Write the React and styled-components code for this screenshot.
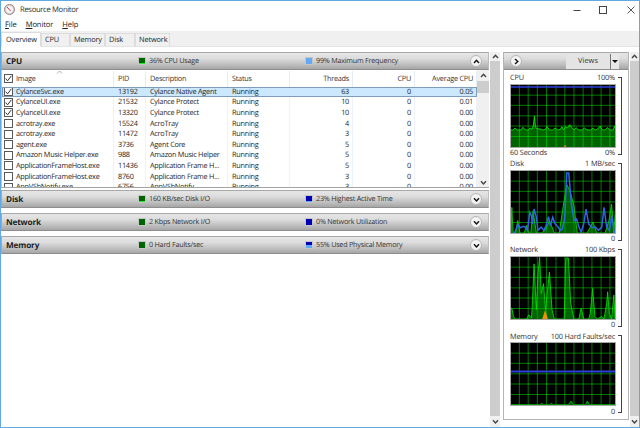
import React from 'react';
import styled, { createGlobalStyle } from 'styled-components';

const Global = createGlobalStyle`
  html, body { margin: 0; padding: 0; background: #fff; }
  body { font-family: "Open Sans", "Liberation Sans", sans-serif; font-size: 7.3px; color: #262626; text-rendering: geometricPrecision; }
  * { box-sizing: border-box; }
`;

const Window = styled.div`
  width: 640px; height: 428px; border: 1px solid #62a9e4; display: flex; flex-direction: column;
  overflow: hidden; background: #fff;
`;
const TitleBar = styled.div`
  height: 17px; display: flex; align-items: center; padding-left: 3px; gap: 5px; font-size: 7.7px; letter-spacing: -0.35px; color: #333;
`;
const Controls = styled.div`
  margin-left: auto; display: flex; align-items: center; gap: 18px; padding-right: 4px;
  color: #333;
`;
const MenuBar = styled.div`
  height: 13px; display: flex; align-items: center; padding-left: 4px; font-size: 7.6px; letter-spacing: -0.1px; color: #222;
  span { margin-right: 9px; }
  u { text-decoration-thickness: 0.5px; text-underline-offset: 1px; }
`;
const TabStrip = styled.div`
  height: 16px; background: #f0f0f0; display: flex; align-items: flex-end; padding-left: 0; border-bottom: 1px solid #e4e4e4;
`;
const Tab = styled.div`
  height: ${p => (p.$active ? 15 : 13)}px; width: ${p => p.$w}px; display: flex; align-items: center;
  padding-left: ${p => (p.$active ? 4 : 3)}px; font-size: 7.4px; letter-spacing: -0.15px;
  background: ${p => (p.$active ? '#fff' : '#f0f0f0')};
  border: 1px solid #dcdcdc; border-bottom: ${p => (p.$active ? '1px solid #fff' : 'none')};
  margin-bottom: ${p => (p.$active ? -1 : 0)}px; z-index: ${p => (p.$active ? 1 : 0)};
`;
const Body = styled.div`
  flex: 1; min-height: 0; display: flex; padding-top: 5px;
`;
const LeftCol = styled.div`
  width: 488px; display: flex; flex-direction: column;
`;
const Header = styled.div`
  height: 18px; flex: none; display: grid; grid-template-columns: 136px 167px 1fr 18px; align-items: center;
  background: linear-gradient(#e6e6e6 0%, #dcdcdc 35%, #c4c4c4 65%, #a6a6a6 100%);
  border: 1px solid #a8a8a8; border-bottom-color: #8e8e8e; border-right-color: #bdbdbd;
  margin-top: ${p => p.$mt || 0}px;
`;
const HName = styled.div`
  font-weight: 700; font-size: 8.2px; letter-spacing: -0.15px; padding-left: 4px; color: #1c1c1c;
`;
const Stat = styled.div`
  display: flex; align-items: center; gap: 3px; font-size: 7.2px; letter-spacing: -0.22px; color: #333;
`;
const Led = styled.i`
  display: block; width: 8px; height: 8px; border: 1px solid #c6c6c6; flex: none;
  background: linear-gradient(to top, ${p => p.$lit} ${p => p.$level}%, ${p => p.$dark} ${p => p.$level}%);
`;
const Round = styled.div`
  width: 12px; height: 12px; border-radius: 50%; background: #f4f4f4; border: 1px solid #b6b6b6;
  display: flex; align-items: center; justify-content: center; color: #111;
`;
const TableWrap = styled.div`
  height: 118px; flex: none; display: flex; border-bottom: 1px solid #a4a4a4; border-left: 1px solid #c4c4c4; overflow: hidden;
`;
const Table = styled.div`
  width: 475px; flex: none; position: relative; padding-top: 1px; letter-spacing: -0.25px;
`;
const Cols = `display: grid; grid-template-columns: 112px 32px 82px 62px 63px 62px 62px;`;
const HeadRow = styled.div`
  ${Cols} height: 15.5px; align-items: center;
`;
const HeadCell = styled.div`
  padding: 0 ${p => (p.$right ? 3 : 4)}px; height: 100%; display: flex; align-items: center; gap: 3px;
  justify-content: ${p => (p.$right ? 'flex-end' : 'flex-start')}; border-right: 1px solid #e4ecf6; color: #333;
`;
const Caret = styled.svg`
  position: absolute; left: 54px; top: 0;
`;
const Row = styled.div`
  ${Cols} height: 10.6px; align-items: center; white-space: nowrap; line-height: 10px;
  outline: ${p => (p.$sel ? '1px solid #7f9db9' : 'none')}; outline-offset: -1px;
  background: ${p => (p.$sel ? '#cce8ff' : 'transparent')};
`;
const Cell = styled.div`
  padding: 0 ${p => (p.$right ? 3 : 4)}px; text-align: ${p => (p.$right ? 'right' : 'left')};
  overflow: hidden; height: 100%; display: flex; align-items: center; gap: 3px;
  justify-content: ${p => (p.$right ? 'flex-end' : 'flex-start')};
  border-right: 1px solid ${p => (p.$sel ? 'transparent' : '#eef3fa')};
`;
const CheckBox = styled.span`
  width: 9px; height: 9px; border: 1px solid #5a5a5a; background: #fff; flex: none; display: flex;
  margin-left: -2px; margin-right: 0;
`;
const VScroll = styled.div`
  width: ${p => p.$w}px; flex: none; display: flex; flex-direction: column; align-items: center;
  background: #f0f0f0; height: 100%; margin-left: ${p => p.$ml || 0}px;
`;
const Arrow = styled.div`
  height: ${p => p.$h}px; flex: none; display: flex; align-items: center; justify-content: center; color: #444; width: 100%;
`;
const Thumb = styled.div`
  width: 100%; background: #cdcdcd; flex: ${p => (p.$small ? 'none' : 1)}; height: ${p => (p.$small ? '12px' : 'auto')};
`;
const Spacer = styled.div`flex: 1;`;
const RightBox = styled.div`
  width: 126px; margin-left: 3px; margin-right: 1px; height: 368px; border: 1px solid #b4b4b4; border-top: none; flex: none;
`;
const RightHeader = styled.div`
  height: 18px; display: flex; align-items: center; padding-left: 6px;
  background: linear-gradient(#e6e6e6 0%, #dcdcdc 35%, #c4c4c4 65%, #a6a6a6 100%);
  border-top: 1px solid #a8a8a8; border-bottom: 1px solid #8e8e8e;
`;
const Views = styled.div`
  margin-left: 44px; width: 45px; height: 15px; background: #e4e4e4; border-right: 1px solid #777;
  display: flex; align-items: center; justify-content: center; font-size: 7.5px; color: #333;
`;
const ViewsDrop = styled.div`
  width: 8px; height: 15px; background: #e8e8e8; display: flex; align-items: center; justify-content: center;
`;
const Graphs = styled.div`
  padding: 2.5px 0 0 6px; display: flex; flex-direction: column; gap: 0.2px;
`;
const Block = styled.div`
  display: grid; grid-template-columns: 106px 6px; grid-template-rows: 11px 64px 11px; column-gap: 1px;
`;
const Label = styled.div`
  display: flex; justify-content: space-between; align-items: center; font-size: 7.3px; letter-spacing: -0.15px; color: #333; white-space: nowrap; padding-right: 1px;
`;
const Bracket = styled.div`
  grid-column: 2; grid-row: 1 / 4; margin: 4px 1px 4px 1px; border: 1px solid #444; border-left: none; width: 4px;
`;
const GraphSvg = styled.svg`
  display: block; width: 106px; height: 64px; border: 1px solid #a8a8a8; background: #000;
`;

const toPts = a => a.map(p => p.join(',')).join(' ');
const Grid = () => (
  <g stroke="#00ff00" strokeOpacity="0.48" strokeWidth="3">
    {[33, 60, 88, 116, 145, 172, 200, 228, 255, 283, 310].map(x => <line key={x} x1={x} x2={x} y1="9" y2="198" />)}
    {[40, 71, 103, 134, 166].map(y => <line key={y} x1="7" x2="326" y1={y} y2={y} />)}
  </g>
);
const Area = ({ pts, fill = '#00a000', op = 0.55, line = '#00e000', w = 2.6 }) => (
  <g>
    <polygon points={toPts([[7, 198], ...pts, [326, 198]])} fill={fill} fillOpacity={op} />
    <polyline points={toPts(pts)} fill="none" stroke={line} strokeWidth={w} />
  </g>
);

const cpuPts = [[7,146],[14,146],[20,140],[26,146],[38,146],[44,138],[52,146],[60,146],[66,140],[72,144],[76,132],[79,104],[82,132],[85,142],[95,143],[105,146],[112,144],[118,136],[125,146],[135,146],[142,140],[150,146],[158,145],[163,136],[168,146],[174,136],[180,140],[187,130],[193,138],[200,146],[207,139],[214,146],[225,146],[232,140],[240,146],[250,146],[258,141],[265,146],[272,143],[280,134],[287,146],[295,146],[302,139],[310,146],[320,146],[324,134],[326,140]];
const diskGreen = [[7,198],[10,120],[14,198],[22,198],[28,160],[35,198],[48,198],[55,175],[62,198],[68,198],[75,130],[85,198],[100,198],[112,190],[125,160],[140,198],[155,198],[165,130],[178,50],[188,70],[200,115],[210,198],[240,198],[258,165],[270,198],[295,198],[307,160],[315,110],[322,198],[326,140]];
const diskBlue = [[14,198],[20,195],[28,172],[35,182],[45,178],[52,180],[58,190],[65,135],[70,145],[73,170],[78,125],[85,150],[90,190],[100,180],[108,190],[115,175],[122,148],[128,175],[135,150],[142,170],[150,178],[158,190],[165,185],[172,150],[178,15],[184,15],[188,60],[192,110],[200,160],[208,155],[215,180],[222,195],[230,170],[237,125],[245,170],[255,182],[265,180],[275,190],[285,180],[292,120],[300,180],[308,190],[316,145],[322,190],[326,198]];
const netPts = [[7,165],[10,165],[15,190],[20,198],[55,198],[62,185],[70,195],[72,165],[78,30],[85,170],[90,60],[95,10],[100,120],[107,90],[113,170],[125,55],[133,170],[140,198],[170,198],[175,12],[183,12],[190,150],[200,198],[215,198],[222,165],[230,198],[245,198],[250,180],[257,105],[264,190],[272,198],[285,190],[292,198],[300,150],[303,115],[308,180],[315,198],[322,125],[326,198]];
const memPts = [[7,197],[95,197],[101,193],[107,197],[125,197],[131,193],[137,197],[183,197],[191,186],[199,197],[235,197],[241,186],[247,197],[326,197]];

const graphs = [
  { n: 'CPU', t: '100%', f: '60 Seconds', b: '0%', draw: <>
    <Area pts={cpuPts} fill="#00a000" op={0.62} line="#00f000" /><Grid />
    <line x1="7" x2="326" y1="15" y2="15" stroke="#2f3fdc" strokeWidth="5" />
    <rect x="170" y="193" width="6" height="5" fill="#e08000" /></> },
  { n: 'Disk', t: '1 MB/sec', f: '', b: '0', draw: <>
    <Grid /><Area pts={diskGreen} fill="#00a000" op={0.6} line="#00d800" />
    <polyline points={toPts(diskBlue)} fill="none" stroke="#2f66e8" strokeWidth="4.5" /></> },
  { n: 'Network', t: '100 Kbps', f: '', b: '0', draw: <>
    <Grid /><Area pts={netPts} fill="#00a800" op={0.6} line="#00e000" />
    <polygon points="103,198 112,170 120,198" fill="#f09000" /></> },
  { n: 'Memory', t: '100 Hard Faults/sec', f: '', b: '0', draw: <>
    <Grid /><Area pts={memPts} fill="#00a000" op={0.6} line="#00c000" />
    <line x1="7" x2="326" y1="96" y2="96" stroke="#2f3fdc" strokeWidth="6" /></> },
];

const sections = [
  { n: 'Disk', a: '160 KB/sec Disk I/O', al: 18, b: '23% Highest Active Time', bl: 22 },
  { n: 'Network', a: '2 Kbps Network I/O', al: 2, b: '0% Network Utilization', bl: 0 },
  { n: 'Memory', a: '0 Hard Faults/sec', al: 0, b: '55% Used Physical Memory', bl: 50 },
];

const rows = [
  ['CylanceSvc.exe','13192','Cylance Native Agent','63','0.05',1,1],
  ['CylanceUI.exe','21532','Cylance Protect','10','0.01',1],
  ['CylanceUI.exe','13320','Cylance Protect','10','0.00',1],
  ['acrotray.exe','15524','AcroTray','4','0.00'],
  ['acrotray.exe','11472','AcroTray','3','0.00'],
  ['agent.exe','3736','Agent Core','5','0.00'],
  ['Amazon Music Helper.exe','988','Amazon Music Helper','5','0.00'],
  ['ApplicationFrameHost.exe','11436','Application Frame H...','5','0.00'],
  ['ApplicationFrameHost.exe','8760','Application Frame H...','3','0.00'],
  ['AppVShNotify.exe','6756','AppVShNotify','3','0.00'],
];

const Tick = () => (
  <svg width="7" height="7" viewBox="0 0 7 7"><path d="M0.6 3.6 L2.6 5.8 L6.4 0.8" fill="none" stroke="#333" strokeWidth="1" /></svg>
);
const Chev = ({ dir = 'up', w = 7, sw = 1.4 }) => {
  const d = { up: 'M1 5 L3.5 2.2 L6 5', down: 'M1 2.2 L3.5 5 L6 2.2', right: 'M2 1 L4.8 3.5 L2 6' }[dir];
  return <svg width={w} height={w} viewBox="0 0 7 7"><path d={d} fill="none" stroke="currentColor" strokeWidth={sw} /></svg>;
};
const AppIcon = () => (
  <svg width="11" height="11" viewBox="0 0 11 11">
    <circle cx="5.5" cy="5.5" r="5" fill="#d9d4d2" stroke="#8a6a6a" strokeWidth="0.8" />
    <circle cx="5.5" cy="5.5" r="3.4" fill="#f6f6f6" />
    <path d="M3 3 L6.6 7" stroke="#c8262a" strokeWidth="0.9" />
  </svg>
);

const green = { $lit: '#22f02a', $dark: '#006400' };
const blue = { $lit: '#62aaf8', $dark: '#0000b4' };

export default function App() {
  return (
    <>
      <Global />
      <Window>
        <TitleBar>
          <AppIcon />
          <span>Resource Monitor</span>
          <Controls>
            <svg width="8" height="8" viewBox="0 0 8 8"><path d="M0.5 4.5H7.5" stroke="#444" strokeWidth="1" /></svg>
            <svg width="8" height="8" viewBox="0 0 8 8"><rect x="0.5" y="0.5" width="7" height="7" fill="none" stroke="#444" strokeWidth="1" /></svg>
            <svg width="8" height="8" viewBox="0 0 8 8" style={{ marginLeft: 2 }}><path d="M0.5 0.5L7.5 7.5M7.5 0.5L0.5 7.5" stroke="#444" strokeWidth="0.9" /></svg>
          </Controls>
        </TitleBar>
        <MenuBar>
          <span><u>F</u>ile</span>
          <span><u>M</u>onitor</span>
          <span><u>H</u>elp</span>
        </MenuBar>
        <TabStrip>
          <Tab $active $w={40}>Overview</Tab>
          <Tab $w={29}>CPU</Tab>
          <Tab $w={35}>Memory</Tab>
          <Tab $w={30}>Disk</Tab>
          <Tab $w={35}>Network</Tab>
        </TabStrip>
        <Body>
          <LeftCol>
            <Header>
              <HName>CPU</HName>
              <Stat><Led {...green} $level={25} />36% CPU Usage</Stat>
              <Stat><Led $lit="#62aaf8" $dark="#62aaf8" $level={100} />99% Maximum Frequency</Stat>
              <Round><Chev dir="up" /></Round>
            </Header>
            <TableWrap>
              <Table>
                <Caret width="7" height="4" viewBox="0 0 7 4"><path d="M1 3.5L3.5 1L6 3.5" fill="none" stroke="#999" strokeWidth="0.8" /></Caret>
                <HeadRow>
                  <HeadCell><CheckBox><Tick /></CheckBox>Image</HeadCell>
                  <HeadCell>PID</HeadCell>
                  <HeadCell>Description</HeadCell>
                  <HeadCell>Status</HeadCell>
                  <HeadCell $right>Threads</HeadCell>
                  <HeadCell $right>CPU</HeadCell>
                  <HeadCell $right>Average CPU</HeadCell>
                </HeadRow>
                {rows.map((r, i) => (
                  <Row key={i} $sel={r[6]}>
                    <Cell $sel={r[6]}><CheckBox>{r[5] ? <Tick /> : null}</CheckBox>{r[0]}</Cell>
                    <Cell $sel={r[6]}>{r[1]}</Cell>
                    <Cell $sel={r[6]}>{r[2]}</Cell>
                    <Cell $sel={r[6]}>Running</Cell>
                    <Cell $sel={r[6]} $right>{r[3]}</Cell>
                    <Cell $sel={r[6]} $right>0</Cell>
                    <Cell $sel={r[6]} $right>{r[4]}</Cell>
                  </Row>
                ))}
              </Table>
              <VScroll $w={12}>
                <Arrow $h={11}><Chev dir="up" /></Arrow>
                <Thumb $small />
                <Spacer />
                <Arrow $h={10}><Chev dir="down" /></Arrow>
              </VScroll>
            </TableWrap>
            <Header $mt={2}>
              <HName>{sections[0].n}</HName>
              <Stat><Led {...green} $level={sections[0].al} />{sections[0].a}</Stat>
              <Stat><Led {...blue} $level={sections[0].bl} />{sections[0].b}</Stat>
              <Round><Chev dir="down" /></Round>
            </Header>
            {sections.slice(1).map(s => (
              <Header key={s.n} $mt={5}>
                <HName>{s.n}</HName>
                <Stat><Led {...green} $level={s.al} />{s.a}</Stat>
                <Stat><Led {...blue} $level={s.bl} />{s.b}</Stat>
                <Round><Chev dir="down" /></Round>
              </Header>
            ))}
          </LeftCol>
          <VScroll $w={10} $ml={1}>
            <Arrow $h={9}><Chev dir="up" /></Arrow>
            <Thumb />
            <Arrow $h={11}><Chev dir="down" /></Arrow>
          </VScroll>
          <RightBox>
            <RightHeader>
              <Round><Chev dir="right" /></Round>
              <Views>Views</Views>
              <ViewsDrop><svg width="6" height="5" viewBox="0 0 6 5"><path d="M0 1H6L3 4Z" fill="#111" /></svg></ViewsDrop>
            </RightHeader>
            <Graphs>
              {graphs.map(g => (
                <Block key={g.n}>
                  <Label><span>{g.n}</span><span>{g.t}</span></Label>
                  <Bracket />
                  <GraphSvg viewBox="7.5 9 318 189" preserveAspectRatio="none">{g.draw}</GraphSvg>
                  <Label><span>{g.f}</span><span>{g.b}</span></Label>
                </Block>
              ))}
            </Graphs>
          </RightBox>
          <VScroll $w={9}>
            <Arrow $h={9}><Chev dir="up" /></Arrow>
            <Thumb />
            <Arrow $h={11}><Chev dir="down" /></Arrow>
          </VScroll>
        </Body>
      </Window>
    </>
  );
}
